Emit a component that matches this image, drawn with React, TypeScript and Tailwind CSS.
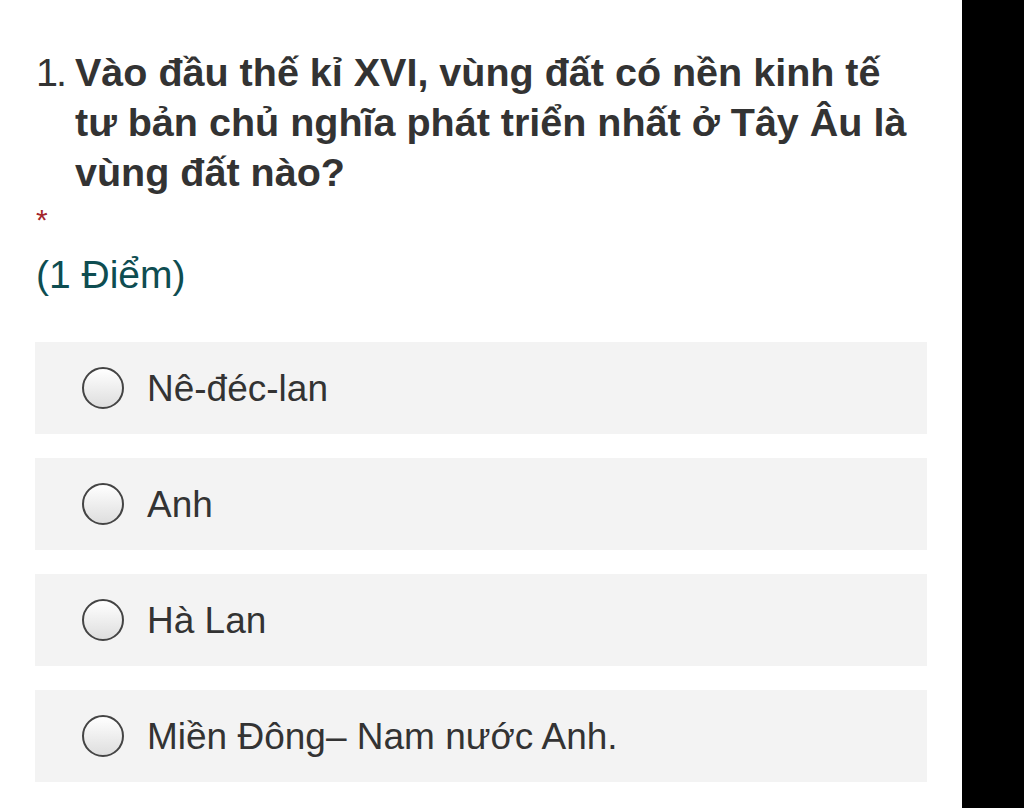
const options = ["Nê-đéc-lan", "Anh", "Hà Lan", "Miền Đông– Nam nước Anh."];

const Radio = () => (
	<span className="block w-[42px] h-[42px] shrink-0 rounded-full border-2 border-[#444444] bg-gradient-to-b from-white to-[#dedede]" />
);

export default function App() {
	return (
		<div className="flex h-[808px] w-[1024px] overflow-hidden bg-white font-['Liberation_Sans',Arial,sans-serif]">
			<div className="w-[962px] shrink-0 pl-[35px] pr-[35px] pt-[47px]">
				<div className="flex text-[#333333] text-[39.5px] leading-[50px]">
					<span className="w-[40px] shrink-0 pl-[1px] tracking-[-2px]">1.</span>
					<span className="font-bold max-w-[840px]">
						Vào đầu thế kỉ XVI, vùng đất có nền kinh tế tư bản chủ nghĩa phát triển nhất ở Tây Âu là vùng đất nào?
					</span>
				</div>
				<div className="mt-[8px] pl-[1px] text-[#a4262c] text-[30px] leading-[30px]">*</div>
				<div className="mt-[18px] pl-[1px] text-[#0e4d51] text-[39px] leading-[44px]">(1 Điểm)</div>
				<div className="mt-[45px] flex flex-col gap-[24px]">
					{options.map((opt) => (
						<div key={opt} className="flex items-center gap-[23px] h-[92px] bg-[#f3f3f3] pl-[47px]">
							<Radio />
							<span className="text-[37px] text-[#333333] leading-none">{opt}</span>
						</div>
					))}
				</div>
			</div>
			<div className="flex-1 bg-black" />
		</div>
	);
}
